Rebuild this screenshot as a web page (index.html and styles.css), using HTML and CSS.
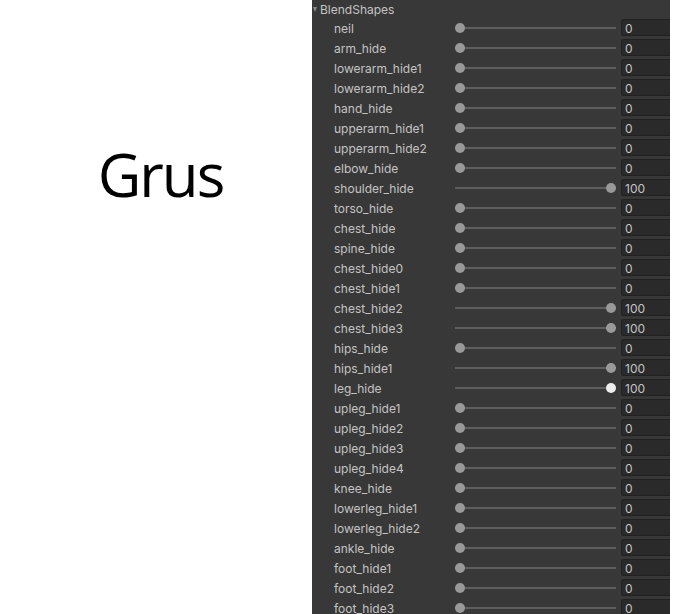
FILE: index.html
```html
<!DOCTYPE html>
<html>
<head>
<meta charset="utf-8">
<link rel="stylesheet" href="styles.css">
</head>
<body>
<div class="page">
  <div class="left"><div class="title">Grus</div></div>
  <div class="panel">
    <div class="header"><span class="tri"></span><span class="htext">BlendShapes</span></div>
    <div class="row"><span class="label">neil</span><div class="slider"><div class="track"></div><div class="knob"></div></div><div class="field">0</div></div>
    <div class="row"><span class="label">arm_hide</span><div class="slider"><div class="track"></div><div class="knob"></div></div><div class="field">0</div></div>
    <div class="row"><span class="label">lowerarm_hide1</span><div class="slider"><div class="track"></div><div class="knob"></div></div><div class="field">0</div></div>
    <div class="row"><span class="label">lowerarm_hide2</span><div class="slider"><div class="track"></div><div class="knob"></div></div><div class="field">0</div></div>
    <div class="row"><span class="label">hand_hide</span><div class="slider"><div class="track"></div><div class="knob"></div></div><div class="field">0</div></div>
    <div class="row"><span class="label">upperarm_hide1</span><div class="slider"><div class="track"></div><div class="knob"></div></div><div class="field">0</div></div>
    <div class="row"><span class="label">upperarm_hide2</span><div class="slider"><div class="track"></div><div class="knob"></div></div><div class="field">0</div></div>
    <div class="row"><span class="label">elbow_hide</span><div class="slider"><div class="track"></div><div class="knob"></div></div><div class="field">0</div></div>
    <div class="row"><span class="label">shoulder_hide</span><div class="slider"><div class="track"></div><div class="knob full"></div></div><div class="field">100</div></div>
    <div class="row"><span class="label">torso_hide</span><div class="slider"><div class="track"></div><div class="knob"></div></div><div class="field">0</div></div>
    <div class="row"><span class="label">chest_hide</span><div class="slider"><div class="track"></div><div class="knob"></div></div><div class="field">0</div></div>
    <div class="row"><span class="label">spine_hide</span><div class="slider"><div class="track"></div><div class="knob"></div></div><div class="field">0</div></div>
    <div class="row"><span class="label">chest_hide0</span><div class="slider"><div class="track"></div><div class="knob"></div></div><div class="field">0</div></div>
    <div class="row"><span class="label">chest_hide1</span><div class="slider"><div class="track"></div><div class="knob"></div></div><div class="field">0</div></div>
    <div class="row"><span class="label">chest_hide2</span><div class="slider"><div class="track"></div><div class="knob full"></div></div><div class="field">100</div></div>
    <div class="row"><span class="label">chest_hide3</span><div class="slider"><div class="track"></div><div class="knob full"></div></div><div class="field">100</div></div>
    <div class="row"><span class="label">hips_hide</span><div class="slider"><div class="track"></div><div class="knob"></div></div><div class="field">0</div></div>
    <div class="row"><span class="label">hips_hide1</span><div class="slider"><div class="track"></div><div class="knob full"></div></div><div class="field">100</div></div>
    <div class="row"><span class="label">leg_hide</span><div class="slider"><div class="track"></div><div class="knob full hover"></div></div><div class="field">100</div></div>
    <div class="row"><span class="label">upleg_hide1</span><div class="slider"><div class="track"></div><div class="knob"></div></div><div class="field">0</div></div>
    <div class="row"><span class="label">upleg_hide2</span><div class="slider"><div class="track"></div><div class="knob"></div></div><div class="field">0</div></div>
    <div class="row"><span class="label">upleg_hide3</span><div class="slider"><div class="track"></div><div class="knob"></div></div><div class="field">0</div></div>
    <div class="row"><span class="label">upleg_hide4</span><div class="slider"><div class="track"></div><div class="knob"></div></div><div class="field">0</div></div>
    <div class="row"><span class="label">knee_hide</span><div class="slider"><div class="track"></div><div class="knob"></div></div><div class="field">0</div></div>
    <div class="row"><span class="label">lowerleg_hide1</span><div class="slider"><div class="track"></div><div class="knob"></div></div><div class="field">0</div></div>
    <div class="row"><span class="label">lowerleg_hide2</span><div class="slider"><div class="track"></div><div class="knob"></div></div><div class="field">0</div></div>
    <div class="row"><span class="label">ankle_hide</span><div class="slider"><div class="track"></div><div class="knob"></div></div><div class="field">0</div></div>
    <div class="row"><span class="label">foot_hide1</span><div class="slider"><div class="track"></div><div class="knob"></div></div><div class="field">0</div></div>
    <div class="row"><span class="label">foot_hide2</span><div class="slider"><div class="track"></div><div class="knob"></div></div><div class="field">0</div></div>
    <div class="row"><span class="label">foot_hide3</span><div class="slider"><div class="track"></div><div class="knob"></div></div><div class="field">0</div></div>
  </div>
</div>
</body>
</html>
```

FILE: styles.css
```css
html, body {
  margin: 0;
  padding: 0;
  background: #ffffff;
  height: 614px;
  overflow: hidden;
}
.page {
  display: flex;
  width: 696px;
  height: 614px;
}
.left {
  width: 312px;
  flex: none;
  display: flex;
  justify-content: center;
  align-items: flex-start;
  padding-top: 133px;
  box-sizing: border-box;
}
.title {
  font-family: "Open Sans", sans-serif;
  font-size: 60px;
  line-height: 82px;
  letter-spacing: -2px;
  color: #000;
  margin-left: 9px;
}
.panel {
  width: 358px;
  flex: none;
  background: #383838;
  height: 614px;
  overflow: hidden;
  font-family: Inter, "Noto Sans", sans-serif;
  font-size: 12px;
  color: #c4c4c4;
}
.header {
  height: 18px;
  display: flex;
  align-items: center;
  gap: 3px;
}
.tri {
  width: 0;
  height: 0;
  border-left: 2.5px solid transparent;
  border-right: 2.5px solid transparent;
  border-top: 5px solid #8a8a8a;
  margin-left: 1px;
  margin-top: 0;
}
.htext {
  line-height: 18px;
  padding-top: 1px;
}
.row {
  height: 20px;
  display: flex;
  align-items: center;
}
.label {
  width: 143px;
  flex: none;
  padding-left: 22px;
  padding-top: 2px;
  box-sizing: border-box;
  white-space: nowrap;
  line-height: 18px;
}
.slider {
  position: relative;
  width: 161px;
  height: 20px;
  flex: none;
}
.track {
  position: absolute;
  left: 0;
  right: 0;
  top: 9px;
  height: 2px;
  background: #5e5e5e;
}
.knob {
  position: absolute;
  left: 0;
  top: 5px;
  width: 10px;
  height: 10px;
  border-radius: 50%;
  background: #999999;
}
.knob.full {
  left: auto;
  right: 0;
}
.knob.hover {
  background: #eeeeee;
}
.field {
  margin-left: 5px;
  width: 49px;
  height: 17px;
  flex: none;
  box-sizing: border-box;
  background: #2a2a2a;
  border: 1px solid #212121;
  border-right: none;
  border-radius: 3px 0 0 3px;
  padding-left: 3px;
  padding-top: 2px;
  line-height: 13px;
  margin-top: -1px;
  color: #c4c4c4;
}
```
